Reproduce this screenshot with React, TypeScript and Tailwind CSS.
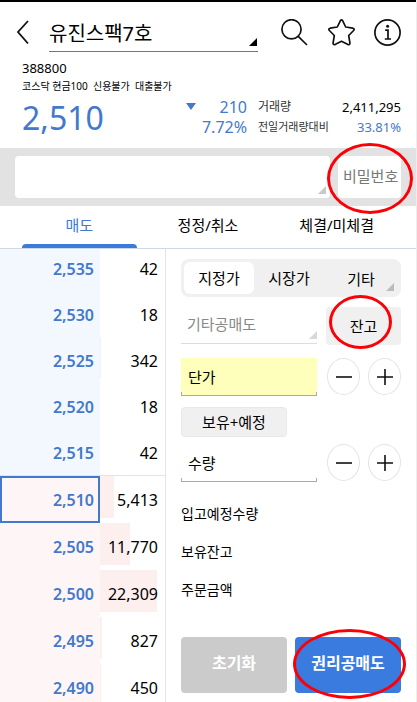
import React from 'react';

type Level = { price: string; qty: string; bar: string };

const asks: Level[] = [
  { price: '2,535', qty: '42', bar: 'w-0' },
  { price: '2,530', qty: '18', bar: 'w-0' },
  { price: '2,525', qty: '342', bar: 'w-px' },
  { price: '2,520', qty: '18', bar: 'w-0' },
  { price: '2,515', qty: '42', bar: 'w-0' },
];

const bids: Level[] = [
  { price: '2,510', qty: '5,413', bar: 'w-[14px]' },
  { price: '2,505', qty: '11,770', bar: 'w-[30px]' },
  { price: '2,500', qty: '22,309', bar: 'w-[57px]' },
  { price: '2,495', qty: '827', bar: 'w-[2px]' },
  { price: '2,490', qty: '450', bar: 'w-px' },
];

function Corner({ className }: { className: string }) {
  return (
    <svg viewBox="0 0 8 8" className={`pointer-events-none absolute size-2 ${className}`} aria-hidden="true">
      <path d="M8 0V8H0Z" fill="currentColor" />
    </svg>
  );
}

function Ring({ className }: { className: string }) {
  return <span aria-hidden="true" className={`pointer-events-none absolute z-10 rounded-[50%] border-3 border-[#fb0007] ${className}`} />;
}

function Header() {
  return (
    <header className="flex items-start gap-5 border-t-2 border-black pt-3.5 pr-[15px] pl-4">
      <button aria-label="뒤로" className="mt-[3px]">
        <svg viewBox="0 0 13 27" className="h-[27px] w-[13px]" fill="none" stroke="#111" strokeWidth="1.8">
          <path d="M12 2L2 13L12 24.500" />
        </svg>
      </button>
      <div className="relative mr-[3px] min-w-0 flex-1">
        <select aria-label="종목" className="h-9 w-full appearance-none border-b border-[#777] text-xl text-black outline-none">
          <option>유진스팩7호</option>
        </select>
        <Corner className="right-px bottom-[6px] text-black" />
      </div>
      <button aria-label="검색" className="mt-[3px]">
        <svg viewBox="0 0 27 27" className="size-[27px]" fill="none" stroke="#111" strokeWidth="1.700">
          <circle cx="10.500" cy="10.300" r="9.600" />
          <path d="M17.200 17.300L26 26" />
        </svg>
      </button>
      <button aria-label="관심종목" className="mt-[3px]">
        <svg viewBox="0 0 27 27" className="size-[27px]" fill="none" stroke="#111" strokeWidth="1.700" strokeLinejoin="round">
          <path d="M12.300 1.800Q13.500 0 14.700 1.800L17.700 8L24.800 9.200Q27 9.900 25.600 11.500L20.700 16.500L21.900 23.900Q22 26.200 20 25.600L13.500 22.300L7 25.600Q5 26.200 5.100 23.900L6.300 16.500L1.400 11.500Q0 9.900 2.200 9.200L9.300 8Z" />
        </svg>
      </button>
      <button aria-label="정보" className="mt-[3px] -ml-px">
        <svg viewBox="0 0 27 27" className="size-[27px]" fill="none" stroke="#111" strokeWidth="1.700">
          <circle cx="13.500" cy="13.500" r="12.600" />
          <path d="M11.200 11.200H14V19.600M10.800 20H17" />
          <circle cx="13.600" cy="7.200" r="1.500" fill="#111" stroke="none" />
        </svg>
      </button>
    </header>
  );
}

function Quote() {
  return (
    <section className="pt-1.5 pr-[15px] pb-[11px] pl-[22px]">
      <p className="text-[13px] leading-5">388800</p>
      <p className="text-[10px] leading-4 whitespace-pre">코스닥 현금100  신용불가  대출불가</p>
      <div className="mt-[3px] flex h-10 items-center text-[#4379cc]">
        <strong className="flex-1 pt-0.5 text-[32px] leading-10 font-normal">2,510</strong>
        <svg viewBox="0 0 10 7" className="mt-1.5 h-[7px] w-2.5 self-start" aria-label="하락">
          <path d="M0 0H10L5 7Z" fill="currentColor" />
        </svg>
        <div className="w-[51px] text-right text-base leading-5">
          <p>210</p>
          <p>7.72%</p>
        </div>
        <dl className="ml-[11px] w-[143px] leading-5">
          <div className="flex items-center justify-between text-black">
            <dt className="text-xs leading-5 text-[#333]">거래량</dt>
            <dd className="text-[13px] leading-5">2,411,295</dd>
          </div>
          <div className="flex items-center justify-between">
            <dt className="text-[11px] leading-5 text-[#333]">전일거래량대비</dt>
            <dd className="text-[13px] leading-5">33.81%</dd>
          </div>
        </dl>
      </div>
    </section>
  );
}

function Account() {
  return (
    <section className="flex gap-2 bg-[#e2e2e2] px-[15px] py-2">
      <div className="relative h-[42px] flex-1">
        <select aria-label="계좌" className="size-full appearance-none rounded bg-white px-2 text-[15px] outline-none">
          <option></option>
        </select>
        <Corner className="right-1 bottom-1 text-[#c8c8c8]" />
      </div>
      <div className="relative h-[42px] w-[63px]">
        <input
          type="password"
          aria-label="비밀번호"
          placeholder="비밀번호"
          className="size-full rounded bg-white pb-0.5 pl-[5px] text-[15px] outline-none placeholder:text-[#777]"
        />
        <Ring className="-top-[13px] -left-[11px] h-[71px] w-[86px]" />
      </div>
    </section>
  );
}

function Tabs() {
  return (
    <nav role="tablist" className="grid h-[43px] grid-cols-3 border-b border-[#cfd9e1] px-[15px] text-[15px]">
      <button role="tab" aria-selected="true" className="relative pb-1 text-[#4379cc]">
        매도
        <span className="absolute inset-x-[7px] bottom-0 h-1 rounded-t bg-[#3a7bdc]" />
      </button>
      <button role="tab" aria-selected="false" className="pb-1">정정/취소</button>
      <button role="tab" aria-selected="false" className="pb-1">체결/미체결</button>
    </nav>
  );
}

function OrderBook() {
  return (
    <div className="w-[166px] shrink-0 overflow-hidden border-r border-[#e4e4e4] text-base">
      <ul className="-mt-1 border-b border-[#e4e4e4]">
        {asks.map((l) => (
          <li key={l.price} className="flex h-[46px]">
            <span className="flex w-[100px] items-center justify-end bg-[#f3f8fe] pt-0.5 pr-1.5 font-semibold text-[#4379cc]">{l.price}</span>
            <span className="relative flex flex-1 items-center justify-end pt-0.5 pr-[7px]">
              <span className={`absolute top-0 left-0 h-[41px] bg-[#edf4fc] ${l.bar}`} />
              <span className="relative">{l.qty}</span>
            </span>
          </li>
        ))}
      </ul>
      <ul>
        {bids.map((l, i) => (
          <li key={l.price} className="flex h-[47px]">
            <span
              className={`flex w-[100px] items-center justify-end bg-[#fef6f6] font-semibold text-[#4379cc] ${
                i === 0 ? 'border-2 border-[#4379cc] pr-1' : 'pr-1.5'
              }`}
            >
              {l.price}
            </span>
            <span className="relative flex flex-1 items-center justify-end pr-[7px]">
              <span className={`absolute top-0 left-0 h-[42px] bg-[#feefef] ${l.bar}`} />
              <span className="relative">{l.qty}</span>
            </span>
          </li>
        ))}
      </ul>
    </div>
  );
}

function Stepper({ name, id, fill }: { name: string; id: string; fill: string }) {
  return (
    <div className="flex h-[38px] items-start gap-2">
      <div className={`relative mr-0.5 flex h-[38px] min-w-0 flex-1 items-center pl-[7px] ${fill}`}>
        <label htmlFor={id} className="shrink-0">{name}</label>
        <input id={id} inputMode="numeric" className="min-w-0 flex-1 bg-transparent px-2 text-right outline-none" />
        <span className="absolute inset-x-0 bottom-0 h-1 border-x border-b border-[#aaa]" />
      </div>
      <button aria-label={`${name} 감소`} className="flex h-[37px] w-[33px] items-center justify-center rounded-[50%] border border-[#e4e4e4]">
        <svg viewBox="0 0 16 16" className="size-4 shrink-0" stroke="#111" strokeWidth="1.600">
          <path d="M0 8H16" />
        </svg>
      </button>
      <button aria-label={`${name} 증가`} className="flex h-[37px] w-[33px] items-center justify-center rounded-[50%] border border-[#e4e4e4]">
        <svg viewBox="0 0 16 16" className="size-4 shrink-0" stroke="#111" strokeWidth="1.600">
          <path d="M0 8H16M8 0V16" />
        </svg>
      </button>
    </div>
  );
}

function OrderForm() {
  return (
    <form className="flex min-w-0 flex-1 flex-col px-[15px] pt-2.5 text-[15px]" onSubmit={(e) => e.preventDefault()}>
      <div className="flex h-[38px] rounded-lg bg-[#f0f0f0] p-[3px]">
        <button type="button" className="w-[70px] rounded-md bg-white">지정가</button>
        <button type="button" className="w-[70px]">시장가</button>
        <div className="relative flex-1">
          <select aria-label="기타 호가" className="size-full appearance-none pt-0.5 text-center outline-none">
            <option>기타</option>
          </select>
          <Corner className="right-1 bottom-[3px] text-[#bbb]" />
        </div>
      </div>

      <div className="mt-2.5 flex h-[38px] gap-[9px]">
        <div className="relative h-[37px] min-w-0 flex-1">
          <select aria-label="매도 유형" className="size-full appearance-none border-b border-[#ddd] pb-0.5 pl-1.5 text-[#888] outline-none">
            <option>기타공매도</option>
          </select>
          <Corner className="right-0 bottom-[5px] text-[#d8d8d8]" />
        </div>
        <div className="relative w-[75px]">
          <button type="button" className="size-full rounded bg-[#f0f0f0]">잔고</button>
          <Ring className="-top-3 left-[3px] h-[54px] w-[63px]" />
        </div>
      </div>

      <div className="mt-[13px]">
        <Stepper name="단가" id="unit-price" fill="bg-[#feffba]" />
      </div>
      <button type="button" className="mt-[11px] mb-[7px] h-[30px] w-[106px] rounded border border-[#e8e8e8] bg-[#f0f0f0] text-[15px]">보유+예정</button>
      <Stepper name="수량" id="quantity" fill="bg-white" />

      <ul className="mt-[13px] text-sm leading-[38px]">
        <li>입고예정수량</li>
        <li>보유잔고</li>
        <li>주문금액</li>
      </ul>

      <div className="mt-7 grid h-14 grid-cols-2 gap-2 text-base font-semibold text-white">
        <button type="reset" className="rounded bg-[#cbcbcb] pb-1">초기화</button>
        <div className="relative">
          <button type="submit" className="size-full rounded bg-[#3a7bdf] pb-1">권리공매도</button>
          <Ring className="-top-2 -left-0.5 h-[70px] w-[113px]" />
        </div>
      </div>
    </form>
  );
}

export default function App() {
  return (
    <div className="flex h-screen flex-col overflow-hidden border-r border-[#eee] bg-white font-['Noto_Sans','Noto_Sans_CJK_KR',sans-serif] text-black">
      <Header />
      <Quote />
      <Account />
      <Tabs />
      <main className="flex min-h-0 flex-1">
        <OrderBook />
        <OrderForm />
      </main>
    </div>
  );
}
